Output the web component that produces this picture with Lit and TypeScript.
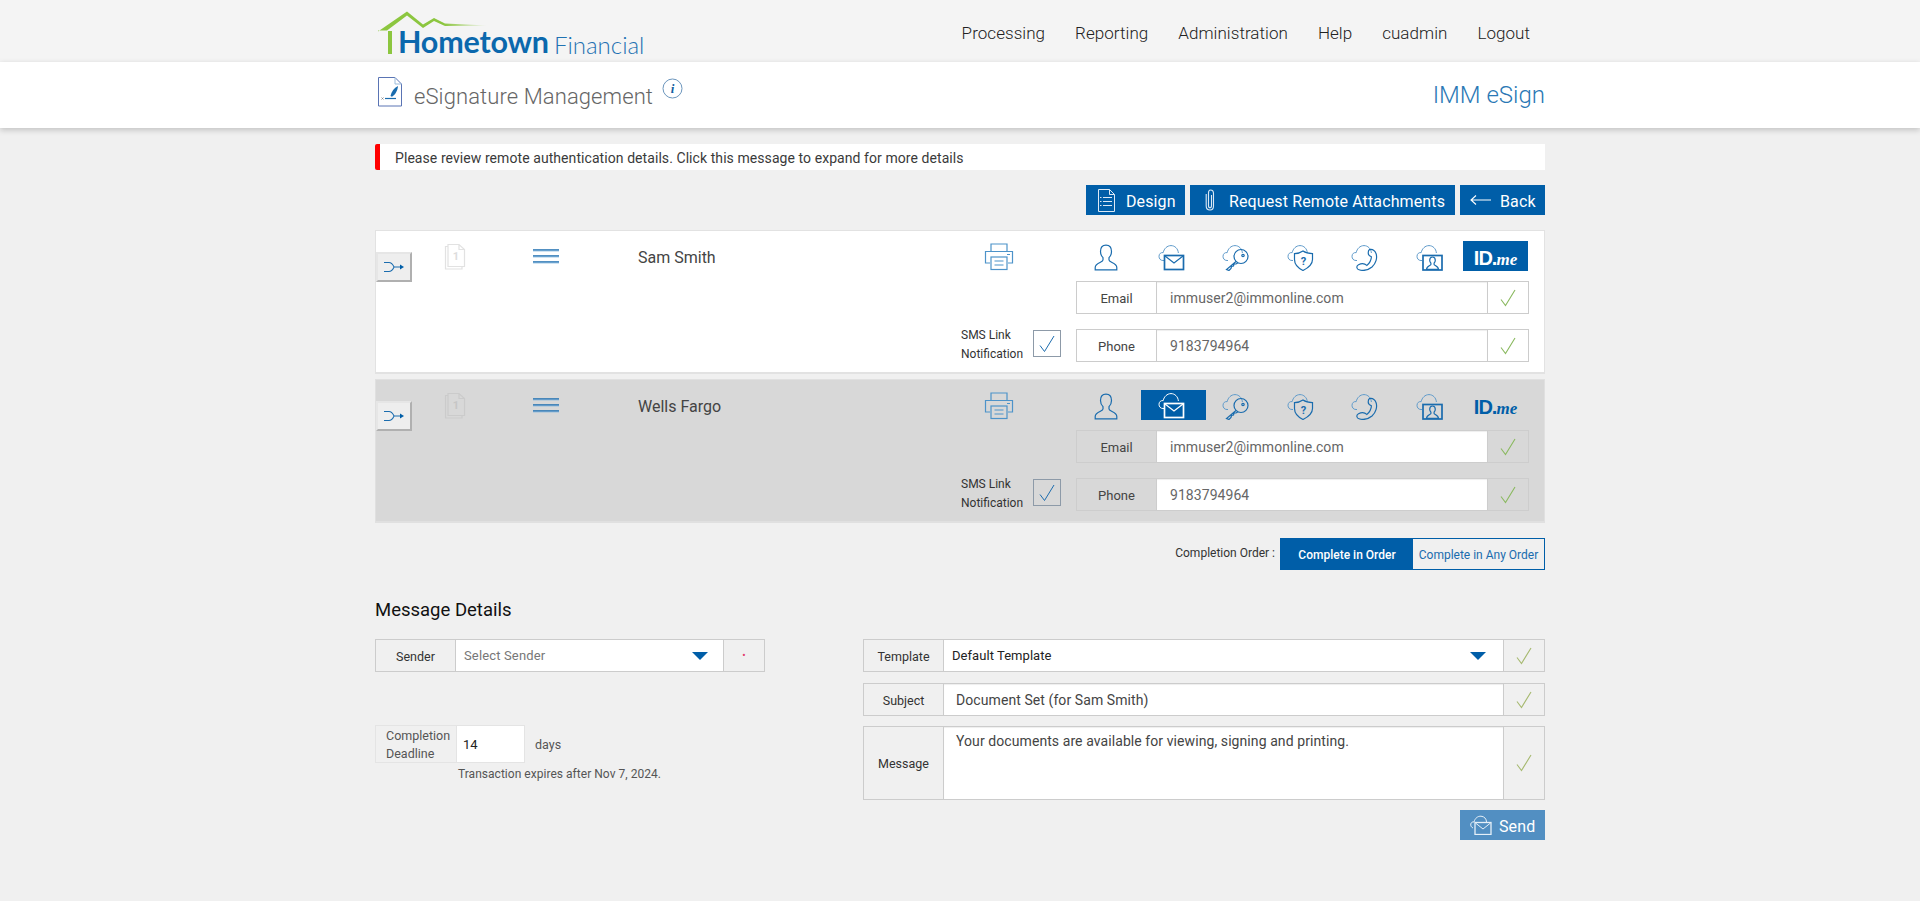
import { LitElement, html, css, svg } from "lit";
import { customElement } from "lit/decorators.js";

const cloud = svg`<path class="cl" d="M6 16.5H5C2.4 16.5 1 14.6 1 12.3C1 9.8 3 8.2 5.2 8.6C6 4.8 9 1.6 13 1.6C16.8 1.6 20 4.6 20.4 9"/>`;
const icons = [
  svg`<path class="dk" d="M12 1.2C8.2 1.2 6.5 4 6.5 7.5C6.5 10 7.5 12.2 9 13.6V16C9 18.4 1.2 19 1.2 23.4V25.8H22.8V23.4C22.8 19 15 18.4 15 16V13.6C16.5 12.2 17.5 10 17.5 7.5C17.5 4 15.8 1.2 12 1.2Z"/>`,
  svg`${cloud}<rect class="dk2" x="6.5" y="11.5" width="19" height="14"/><path class="dk" d="M7 12L16 19L25 12"/>`,
  svg`${cloud}<circle class="dk" cx="19" cy="12.5" r="7"/><circle class="dk" cx="21" cy="11.5" r="1.2"/><path class="dk" d="M14 17.5L4.5 25.5L7 26.5L9 24.5L9.5 22.5L11.5 22L12 20L14 20L16 18.8"/>`,
  svg`${cloud}<path class="dk" d="M16 7C18.5 8.8 21.5 9.6 25.5 9.6V15.5C25.5 20.5 21 24 16 26.5C11 24 7.5 20.5 7.5 15.5V9.6C11 9.6 13.5 8.8 16 7Z"/><text class="q" x="16.5" y="21" text-anchor="middle">?</text>`,
  svg`${cloud}<path class="dk" d="M18.5 5.5C21 5 23.8 6.5 25 9.5C26.6 13.8 24.8 19.5 21 23C17.4 26 12 27 8 25.8C5.5 25 5 22 7.5 20.8C10.5 19.3 14 19.8 15.8 21.4C18.4 19.8 20.4 15.8 20.4 12.8C18.8 12.2 17.2 11.2 17.2 9C17.2 7.4 17.6 6.2 18.5 5.5Z"/>`,
  svg`${cloud}<rect class="dk2" x="7" y="11.5" width="19" height="14.5"/><path class="dk" d="M16.5 13C14.5 13 13.7 14.5 13.7 16.2C13.7 17.5 14.2 18.4 14.9 19.1V20.4C14.9 21.4 10.5 22 10.5 25.4H22.5C22.5 22 18.1 21.4 18.1 20.4V19.1C18.8 18.4 19.3 17.5 19.3 16.2C19.3 14.5 18.5 13 16.5 13Z"/>`,
];

const check = html`<svg class="chk" width="16" height="18" viewBox="0 0 16 18"><path d="M1 10.5L5.5 16.5L15 1"/></svg>`;
const arrow = html`<svg class="arrow" width="16" height="8" viewBox="0 0 16 8"><path d="M0 0H16L8 8Z" fill="#005ea8"/></svg>`;

interface Recipient { name: string; selected: number; shade: boolean; }

@customElement("app-root")
export class AppRoot extends LitElement {
  static styles = css`
    :host { display: block; min-height: 901px; background: #f0f0f0; font-family: Roboto, "Liberation Sans", sans-serif; color: #333; }
    * { box-sizing: border-box; }
    .wrap { width: 1170px; margin: 0 auto; }
    .top { background: #f4f4f4; height: 62px; }
    .top .wrap { display: flex; justify-content: space-between; height: 62px; }
    .logo { position: relative; width: 280px; height: 62px; }
    .logo svg { display: block; }
    .brand { position: absolute; left: 23px; top: 21px; font-family: Lato, sans-serif; font-weight: 700; font-size: 30.5px; line-height: 40px; color: #0b68ad; white-space: nowrap; letter-spacing: -0.2px; }
    .sub { position: absolute; left: 179px; top: 25px; font-family: Lato, sans-serif; font-weight: 300; font-size: 24px; line-height: 40px; color: #1f72b2; white-space: nowrap; }
    nav { display: flex; gap: 30px; padding: 23px 15px 0 0; font-weight: 300; font-size: 17px; letter-spacing: .05px; line-height: 20px; color: #222; }
    .band { background: #fff; height: 66px; box-shadow: 0 2px 6px rgba(0,0,0,.2); position: relative; }
    .band .wrap { display: flex; align-items: flex-start; height: 66px; }
    .docicon { margin: 15px 0 0 3px; }
    .title { margin: 19px 0 0 12px; font-weight: 300; font-size: 22px; letter-spacing: .1px; line-height: 32px; color: #666; }
    .info { margin: 16px 0 0 9px; }
    .info text { font: italic bold 13px "Liberation Serif", serif; fill: #135f9f; }
    .app { margin: 17px 0 0 auto; font-weight: 300; font-size: 24px; line-height: 32px; color: #2a78b5; }
    .alert { margin-top: 16px; height: 26px; background: #fff; border-left: 5px solid #f00; border-radius: 2px 0 0 2px; padding-left: 15px; font-size: 14px; letter-spacing: .07px; line-height: 28px; color: #3a3a3a; overflow: hidden; }
    .tools { display: flex; justify-content: flex-end; gap: 5px; margin-top: 15px; }
    .btn { display: flex; align-items: center; height: 30px; background: #005ea8; color: #fff; font-size: 16px; letter-spacing: .12px; white-space: nowrap; }
    .btn span { padding-top: 2px; }
    .btn.design { width: 99px; padding-left: 12px; gap: 11px; }
    .btn.req { width: 265px; padding-left: 15px; gap: 14px; }
    .btn.back { width: 85px; padding-left: 10px; gap: 9px; }
    .card { display: flex; margin-top: 15px; background: #fff; border: 1px solid #e2e2e2; border-bottom-width: 2px; }
    .card + .card { margin-top: 5px; }
    .card.shade { background: #d8d8d8; border-color: #e0e0e0; }
    .move { width: 36px; height: 30px; margin: 21px 0 0 0; background: #eee; border: 2px solid; border-color: #e6e6e6 #b0b0b0 #b0b0b0 #e6e6e6; display: flex; align-items: center; justify-content: center; flex: none; }
    .pages { flex: none; margin: 12px 0 0 32px; }
    .pages text { font: bold 11px Roboto, sans-serif; fill: #ddd; }
    .shade .pages text { fill: #c6c6c6; }
    .pages path { fill: none; stroke: #e2e2e2; stroke-width: 1.2; }
    .shade .pages path { stroke: #cbcbcb; }
    .lines { flex: none; margin: 18px 0 0 67px; }
    .name { flex: none; width: 323px; margin: 16px 0 0 79px; font-size: 16px; line-height: 22px; color: #444; }
    .mid { flex: none; width: 115px; display: flex; flex-direction: column; justify-content: space-between; padding: 12px 0 12px 0; }
    .print { margin-left: 23px; display: block; }
    .sms { display: flex; align-items: center; font-size: 12px; line-height: 19px; height: 33px; color: #333; }
    .sms span { width: 72px; padding-top: 2px; }
    .box { width: 28px; height: 27px; border: 1px solid #8d9aa8; display: flex; align-items: center; justify-content: center; background: transparent; }
    .box svg path { fill: none; stroke: #1c6cae; stroke-width: 1; }
    .fields { flex: none; width: 453px; padding: 10px 0 10px 0; }
    .iconrow { display: grid; grid-template-columns: repeat(7, 64.4px); padding-left: 1px; height: 30px; margin-bottom: 10px; }
    .ic { display: flex; align-items: center; justify-content: center; height: 30px; padding-right: 4px; }
    .ic:last-child { padding: 4px 0 0; }
    .ic svg { display: block; margin-top: 2px; }
    .ic.on { background: #005ea8; }
    .ic.on svg { margin-top: 0; }
    .ic .cl { fill: none; stroke: #5f9bcb; stroke-width: 1; }
    .ic .dk { fill: none; stroke: #1a6cae; stroke-width: 1.2; }
    .ic .dk2 { fill: none; stroke: #1a6cae; stroke-width: 1.7; }
    .ic .q { font: bold 11px Roboto, sans-serif; fill: #1a6cae; }
    .ic.on .cl, .ic.on .dk, .ic.on .dk2 { stroke: #fff; }
    .idme { font-family: "Liberation Sans", sans-serif; font-weight: 700; font-size: 20px; color: #005ea8; letter-spacing: -1px; }
    .idme i { font-family: "Liberation Serif", serif; font-size: 17px; letter-spacing: 0; }
    .on .idme { color: #fff; }
    .f { display: grid; grid-template-columns: 80px 1fr 41px; height: 33px; border: 1px solid #ccc; font-size: 14px; }
    .f + .f { margin-top: 15px; }
    .f > * { display: flex; align-items: center; }
    .f .l { justify-content: center; border-right: 1px solid #ccc; font-size: 13px; padding-top: 2px; color: #444; background: #fff; }
    .f .v { background: #fff; padding-left: 13px; color: #666; letter-spacing: .06px; box-shadow: inset 0 1px 1px rgba(0,0,0,.07); }
    .f .c { justify-content: center; border-left: 1px solid #ccc; background: #fff; }
    .shade .f { border-color: #cdcdcd; }
    .shade .f .l, .shade .f .c { background: #d8d8d8; border-color: #cdcdcd; }
    .chk path { fill: none; stroke: #8ab95f; stroke-width: 1.1; }
    .order { display: flex; justify-content: flex-end; align-items: center; margin-top: 15px; font-size: 12px; }
    .order .lb { margin-right: 5px; margin-top: -3px; }
    .seg { display: flex; height: 32px; border: 1px solid #005ea8; width: 265px; }
    .seg div { display: flex; align-items: center; justify-content: center; padding-top: 2px; }
    .seg .a { width: 132px; background: #005ea8; color: #fff; font-weight: 500; }
    .seg .b { flex: 1; color: #1a6cae; white-space: nowrap; }
    h2 { margin: 20px 0 9px; font-weight: 400; font-size: 18.5px; line-height: 40px; color: #111; }
    .msg { display: grid; grid-template-columns: 390px 682px; column-gap: 98px; align-items: start; }
    .bg .f .l { background: #f0f0f0; font-size: 12.5px; padding-top: 1px; color: #333; }
    .bg .f .c { background: #f0f0f0; }
    .sender .v { color: #777; font-size: 13px; padding-left: 8px; justify-content: space-between; padding-right: 15px; letter-spacing: .15px; box-shadow: none; }
    .dot { color: #e23b6d; font-size: 10px; line-height: 1; }
    .dl { display: flex; margin-top: 53px; height: 38px; }
    .dl .lab { width: 81px; border: 1px solid #e4e4e4; border-right: 0; font-size: 12.5px; line-height: 18px; padding: 1px 0 0 10px; color: #555; }
    .dl .inp { width: 69px; background: #fff; border: 1px solid #e4e4e4; padding-left: 6px; font-size: 13px; line-height: 38px; color: #222; }
    .dl .days { margin-left: 10px; font-size: 12.5px; line-height: 40px; color: #555; }
    .exp { margin: 2px 0 0 83px; font-size: 12px; letter-spacing: .03px; line-height: 18px; color: #555; }
    .right .f + .f { margin-top: 11px; }
    .right .v { padding-left: 12px; font-size: 14px; color: #444; letter-spacing: .08px; box-shadow: inset 0 1px 1px rgba(0,0,0,.07); }
    .right .sel { font-size: 13px; padding-left: 8px; color: #222; justify-content: space-between; padding-right: 17px; letter-spacing: .05px; box-shadow: none; }
    .right .tall { height: 74px; margin-top: 10px !important; }
    .right .tall .v { align-items: flex-start; padding-top: 6px; }
    .right .chk path { stroke: #a6b96f; }
    .send { display: flex; justify-content: flex-end; margin-top: 10px; }
    .send .btn { width: 85px; background: #528fc2; padding-left: 10px; gap: 7px; }
  `;

  card(r: Recipient) {
    return html`<div class="card ${r.shade ? "shade" : ""}">
      <div class="move"><svg width="22" height="12" viewBox="0 0 22 12"><path d="M1 1.5H6C9 1.5 10 4 11 6C10 8 9 10.5 6 10.5H1M11 6H17" fill="none" stroke="#1a6cae" stroke-width="1.1"/><path d="M17 3.5L21 6L17 8.5Z" fill="#005ea8"/></svg></div>
      <svg class="pages" width="22" height="27" viewBox="0 0 22 27"><path d="M4 1.5H15L20.5 6.5V23.5H4ZM15 1.5V6.5H20.5M4 3.5V23.5M4 3.5H1.5V26H18V23.5"/><text x="12" y="16.5" text-anchor="middle">1</text></svg>
      <svg class="lines" width="26" height="15" viewBox="0 0 26 15"><path d="M0 1H26M0 7H26M0 13H26" stroke="#1a6cae" stroke-width="1.3"/><path d="M0 2H26M0 8H26M0 14H26" stroke="#8dbbdf" stroke-width=".8"/></svg>
      <div class="name">${r.name}</div>
      <div class="mid">
        <svg class="print" width="30" height="28" viewBox="0 0 30 28" fill="none" stroke="#4d93c9" stroke-width="1.2"><path d="M7 8V1H23V8M6 20H1.5V8.5H28.5V20H24"/><rect x="7" y="14" width="16" height="12.5"/><path d="M10.5 18H19.5M10.5 22H19.5M23 11.5H26"/></svg>
        <div class="sms"><span>SMS Link Notification</span><div class="box"><svg width="16" height="18" viewBox="0 0 16 18"><path d="M1 10.5L5.5 16.5L15 1"/></svg></div></div>
      </div>
      <div class="fields">
        <div class="iconrow">
          ${icons.map((ic, i) => html`<div class="ic ${r.selected === i ? "on" : ""}"><svg width="27" height="27" viewBox="0 0 27 27">${ic}</svg></div>`)}
          <div class="ic ${r.selected === 6 ? "on" : ""}"><span class="idme">ID.<i>me</i></span></div>
        </div>
        <div class="f"><div class="l">Email</div><div class="v">immuser2@immonline.com</div><div class="c">${check}</div></div>
        <div class="f"><div class="l">Phone</div><div class="v">9183794964</div><div class="c">${check}</div></div>
      </div>
    </div>`;
  }

  render() {
    return html`
      <div class="top"><div class="wrap">
        <div class="logo">
          <svg width="190" height="62" viewBox="0 0 190 62"><defs><linearGradient id="roof" x1="0" x2="1" y1="0" y2="0"><stop offset=".6" stop-color="#8cc63f"/><stop offset="1" stop-color="#8cc63f" stop-opacity=".1"/></linearGradient></defs><path d="M3 31.5L32 11.5L48 24.5L59 18L70 23.5L112 25.5L70 26L59 21L48 28L32 15.5L12 30.5H3Z" fill="url(#roof)"/><rect x="13" y="31" width="4" height="23" fill="#8cc63f"/></svg>
          <div class="brand">Hometown</div><div class="sub">Financial</div>
        </div>
        <nav><span>Processing</span><span>Reporting</span><span>Administration</span><span>Help</span><span>cuadmin</span><span>Logout</span></nav>
      </div></div>
      <div class="band"><div class="wrap">
        <svg class="docicon" width="24" height="30" viewBox="0 0 24 30" fill="none"><path d="M.5.5H17L23.5 7V29H.5Z" stroke="#5a74b4"/><path d="M17 .5V7H23.5" stroke="#9dbcdb"/><path d="M12.5 19C13.5 14.5 16 11 20 9C19.8 13 17.5 17.5 14 19.8Z" fill="#1a6cae"/><path d="M7 21.5H18" stroke="#1a6cae" stroke-width="1.2"/><path d="M3.5 20.5L5.5 22.5M5.5 20.5L3.5 22.5" stroke="#777" stroke-width=".7"/></svg>
        <div class="title">eSignature Management</div>
        <svg class="info" width="21" height="21" viewBox="0 0 21 21"><circle cx="10.5" cy="10.5" r="9.5" fill="none" stroke="#6c96bd"/><text x="10.5" y="14.5" text-anchor="middle">i</text></svg>
        <div class="app">IMM eSign</div>
      </div></div>
      <div class="wrap">
        <div class="alert">Please review remote authentication details. Click this message to expand for more details</div>
        <div class="tools">
          <div class="btn design"><svg width="17" height="23" viewBox="0 0 17 23" fill="none" stroke="#dce9f5"><path d="M.5.5H11.5L16.5 5.5V22.5H.5ZM11.5.5V5.5H16.5M5 8.5H14M5 12.5H14M5 16.5H14M2 8.5H3.5M2 12.5H3.5M2 16.5H3.5"/></svg><span>Design</span></div>
          <div class="btn req"><svg width="10" height="22" viewBox="0 0 10 22" fill="none" stroke="#dce9f5" stroke-width="1.1"><path d="M6.5 6V16.5C6.5 18 5.8 18.8 5 18.8C4.2 18.8 3.5 18 3.5 16.5V4C3.5 2 4.2 1 5.5 1C7.5 1 8.5 2.3 8.5 4.5V17C8.5 19.6 7 21 5 21C3 21 1.2 19.6 1.2 17V5"/></svg><span>Request Remote Attachments</span></div>
          <div class="btn back"><svg width="21" height="11" viewBox="0 0 21 11" fill="none" stroke="#fff" stroke-width="1.1"><path d="M21 5H1M6 .5L1 5L6 9.5"/></svg><span>Back</span></div>
        </div>
        ${this.card({ name: "Sam Smith", selected: 6, shade: false })}
        ${this.card({ name: "Wells Fargo", selected: 1, shade: true })}
        <div class="order"><div class="lb">Completion Order :</div><div class="seg"><div class="a">Complete in Order</div><div class="b">Complete in Any Order</div></div></div>
        <h2>Message Details</h2>
        <div class="msg">
          <div class="bg">
            <div class="f sender"><div class="l">Sender</div><div class="v">Select Sender${arrow}</div><div class="c"><span class="dot">•</span></div></div>
            <div class="dl"><div class="lab">Completion Deadline</div><div class="inp">14</div><div class="days">days</div></div>
            <div class="exp">Transaction expires after Nov 7, 2024.</div>
          </div>
          <div class="bg right">
            <div class="f"><div class="l">Template</div><div class="v sel">Default Template${arrow}</div><div class="c">${check}</div></div>
            <div class="f"><div class="l">Subject</div><div class="v">Document Set (for Sam Smith)</div><div class="c">${check}</div></div>
            <div class="f tall"><div class="l">Message</div><div class="v">Your documents are available for viewing, signing and printing.</div><div class="c">${check}</div></div>
            <div class="send"><div class="btn"><svg width="22" height="20" viewBox="0 0 22 20" fill="none" stroke="#e6f0f8"><path d="M3 13C1 12 .5 10.5 .8 9C1 7.5 2.5 6.5 4 7C5 3 8 1 11 1.2C14.5 1.5 16.5 4 16.5 7"/><rect x="5" y="7.5" width="16" height="12" stroke-width="1.3"/><path d="M5.5 8L13 14L20.5 8"/></svg><span>Send</span></div></div>
          </div>
        </div>
      </div>
    `;
  }
}
